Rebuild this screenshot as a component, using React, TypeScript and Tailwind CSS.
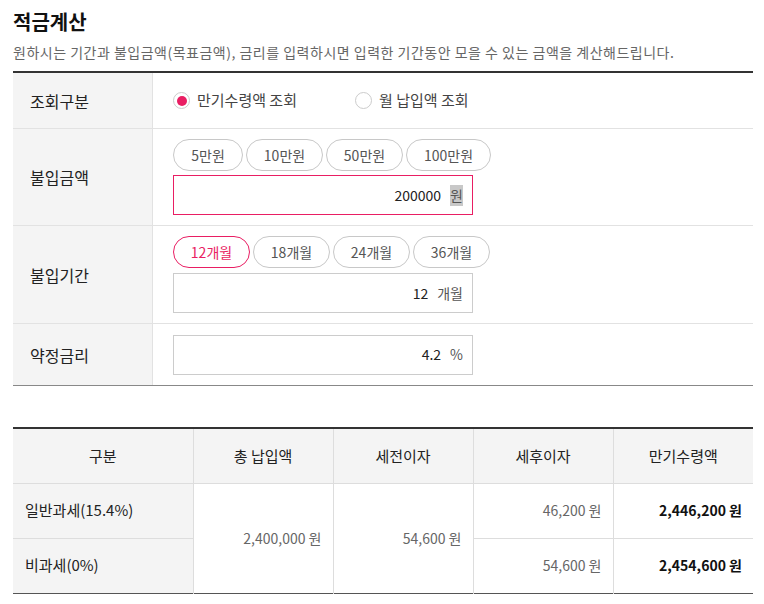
import React, { useState } from 'react';

const amountPresets = ['5만원', '10만원', '50만원', '100만원'];
const periodPresets = ['12개월', '18개월', '24개월', '36개월'];

const font = { fontFamily: '"Noto Sans CJK KR", "Noto Sans", sans-serif' };

const Radio: React.FC<{ checked: boolean; label: string; width?: string }> = ({ checked, label, width }) => (
  <label className={`flex items-center gap-[7px] text-[15px] text-[#444] ${width ?? ''}`}>
    <span className="flex h-[17px] w-[17px] items-center justify-center rounded-full border border-[#ccc] bg-white">
      {checked && <span className="h-[10px] w-[10px] rounded-full bg-[#e91e63]" />}
    </span>
    {label}
  </label>
);

const Pill: React.FC<{ label: string; active?: boolean; width: string }> = ({ label, active, width }) => (
  <button
    className={`h-[32px] ${width} rounded-full border bg-white text-[14px] ${
      active ? 'border-[#e91e63] text-[#e91e63]' : 'border-[#c8c8c8] text-[#555]'
    }`}
  >
    {label}
  </button>
);

const Field: React.FC<{ value: string; unit: string; active?: boolean; unitMark?: boolean }> = ({
  value,
  unit,
  active,
  unitMark,
}) => (
  <div
    className={`flex h-[40px] w-[300px] items-center justify-end border pr-[9px] text-[14px] ${
      active ? 'border-[#e91e63]' : 'border-[#ccc]'
    }`}
  >
    <span className="text-[#222]">{value}</span>
    <span className={`ml-[9px] text-[#555] ${unitMark ? 'bg-[#c8c8c8]' : ''}`}>{unit}</span>
  </div>
);

const RowLabel: React.FC<{ children: React.ReactNode }> = ({ children }) => (
  <div className="flex w-[140px] shrink-0 items-center border-r border-[#e2e2e2] bg-[#f4f4f4] pl-[17px] text-[16px] text-[#222]">
    {children}
  </div>
);

const App: React.FC = () => {
  const [period] = useState('12개월');

  return (
    <div className="bg-white px-[13px] pt-[8px] pb-[10px] w-[764px]" style={font}>
      <h1 className="text-[20px] font-bold leading-[28px] text-[#111]">적금계산</h1>
      <p className="mt-[7px] text-[14px] leading-[18px] tracking-[0.5px] text-[#666]">
        원하시는 기간과 불입금액(목표금액), 금리를 입력하시면 입력한 기간동안 모을 수 있는 금액을 계산해드립니다.
      </p>

      <div className="mt-[10px] w-[740px] border-t-2 border-b border-t-[#333] border-b-[#888]">
        <div className="flex h-[56px] border-b border-[#e2e2e2]">
          <RowLabel>조회구분</RowLabel>
          <div className="flex items-center pl-[20px]">
            <Radio checked label="만기수령액 조회" width="w-[182px]" />
            <Radio checked={false} label="월 납입액 조회" />
          </div>
        </div>

        <div className="flex h-[97px] border-b border-[#e2e2e2]">
          <RowLabel>불입금액</RowLabel>
          <div className="flex flex-col gap-[4px] py-[10px] pl-[20px]">
            <div className="flex gap-[3px]">
              <Pill label={amountPresets[0]} width="w-[70px]" />
              <Pill label={amountPresets[1]} width="w-[77px]" />
              <Pill label={amountPresets[2]} width="w-[77px]" />
              <Pill label={amountPresets[3]} width="w-[85px]" />
            </div>
            <Field value="200000" unit="원" active unitMark />
          </div>
        </div>

        <div className="flex h-[98px] border-b border-[#e2e2e2]">
          <RowLabel>불입기간</RowLabel>
          <div className="flex flex-col gap-[5px] py-[10px] pl-[20px]">
            <div className="flex gap-[3px]">
              {periodPresets.map((p) => (
                <Pill key={p} label={p} active={p === period} width="w-[77px]" />
              ))}
            </div>
            <Field value="12" unit="개월" />
          </div>
        </div>

        <div className="flex h-[61px]">
          <RowLabel>약정금리</RowLabel>
          <div className="flex items-center pl-[20px]">
            <Field value="4.2" unit="%" />
          </div>
        </div>
      </div>

      <table className="mt-[41px] w-[740px] table-fixed border-collapse border-t-2 border-b border-t-[#333] border-b-[#555] text-[14px]">
        <colgroup>
          <col className="w-[180px]" />
          <col className="w-[140px]" />
          <col className="w-[140px]" />
          <col className="w-[140px]" />
          <col className="w-[140px]" />
        </colgroup>
        <thead>
          <tr className="h-[55px] bg-[#f4f4f4] text-[15px] text-[#222]">
            <th className="border-b border-[#ddd] font-normal">구분</th>
            <th className="border-b border-l border-[#ddd] font-normal">총 납입액</th>
            <th className="border-b border-l border-[#ddd] font-normal">세전이자</th>
            <th className="border-b border-l border-[#ddd] font-normal">세후이자</th>
            <th className="border-b border-l border-[#ddd] font-normal">만기수령액</th>
          </tr>
        </thead>
        <tbody>
          <tr className="h-[55px]">
            <td className="border-b border-[#ddd] bg-[#f4f4f4] pl-[12px] text-[15px] text-[#222]">일반과세(15.4%)</td>
            <td rowSpan={2} className="border-l border-[#ddd] pr-[11px] text-right text-[#666]">
              2,400,000 원
            </td>
            <td rowSpan={2} className="border-l border-[#ddd] pr-[11px] text-right text-[#666]">
              54,600 원
            </td>
            <td className="border-b border-l border-[#ddd] pr-[11px] text-right text-[#666]">46,200 원</td>
            <td className="border-b border-l border-[#ddd] pr-[11px] text-right font-bold text-[#111]">2,446,200 원</td>
          </tr>
          <tr className="h-[55px]">
            <td className="bg-[#f4f4f4] pl-[12px] text-[15px] text-[#222]">비과세(0%)</td>
            <td className="border-l border-[#ddd] pr-[11px] text-right text-[#666]">54,600 원</td>
            <td className="border-l border-[#ddd] pr-[11px] text-right font-bold text-[#111]">2,454,600 원</td>
          </tr>
        </tbody>
      </table>
    </div>
  );
};

export default App;
